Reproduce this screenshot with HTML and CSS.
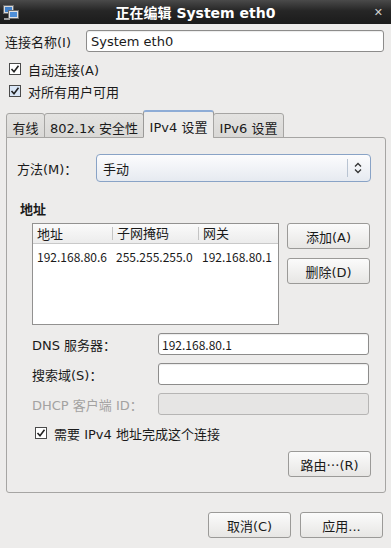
FILE: index.html
```html
<!DOCTYPE html>
<html>
<head>
    <title>正在编辑 System eth0</title>
    <link rel="stylesheet" href="styles.css">
</head>
<body>
<div class="titlebar">
    <svg class="winicon" width="16" height="16" viewBox="0 0 16 16">
        <rect x="0.5" y="0.5" width="10" height="8" fill="#d8d8d8" stroke="#6d6d6d"/>
        <rect x="2" y="2" width="7" height="5" fill="#3f7fc8"/>
        <rect x="5.5" y="5.5" width="10" height="8" fill="#e2e2e2" stroke="#6d6d6d"/>
        <rect x="7" y="7" width="7" height="5" fill="#4f8fd8"/>
        <rect x="1" y="13" width="6" height="2" fill="#9a9a9a"/>
    </svg>
    <div class="title">正在编辑 System eth0</div>
    <div class="close">✕</div>
</div>

<div class="name-row">
    <label class="name-label" for="conn">连接名称(I)</label>
    <input class="field name-field" type="text" id="conn" value="System eth0">
</div>

<div class="check check-first">
    <svg width="12" height="12" viewBox="0 0 12 12"><rect x="0.5" y="0.5" width="11" height="11" fill="#fff" stroke="#4a4a4a"/><path d="M2.5 6 L5 8.8 L9.5 2.8" fill="none" stroke="#222" stroke-width="1.6"/></svg>
    <span>自动连接(A)</span>
</div>
<div class="check">
    <svg width="12" height="12" viewBox="0 0 12 12"><rect x="0.5" y="0.5" width="11" height="11" fill="#d9e6f6" stroke="#4a4a4a"/><path d="M2.5 6 L5 8.8 L9.5 2.8" fill="none" stroke="#222" stroke-width="1.6"/></svg>
    <span>对所有用户可用</span>
</div>

<div class="tabs">
    <div class="tab tab-wired">有线</div>
    <div class="tab tab-sec">802.1x 安全性</div>
    <div class="tab tab-active">IPv4 设置</div>
    <div class="tab tab-v6">IPv6 设置</div>
</div>

<div class="panel">
    <div class="method-row">
        <span class="method-label">方法(M)：</span>
        <div class="select">
            <span class="select-value">手动</span>
            <span class="select-sep"></span>
            <svg class="select-arrow" width="8" height="12" viewBox="0 0 8 12"><path d="M1 4.5 L4 1.5 L7 4.5 M1 7.5 L4 10.5 L7 7.5" fill="none" stroke="#333" stroke-width="1.3"/></svg>
        </div>
    </div>

    <div class="section-title">地址</div>

    <div class="addr-area">
        <div class="addr-list">
            <div class="addr-head">
                <div class="col col1">地址</div>
                <div class="col col2">子网掩码</div>
                <div class="col col3">网关</div>
            </div>
            <div class="addr-row">
                <div class="col col1">192.168.80.6</div>
                <div class="col col2">255.255.255.0</div>
                <div class="col col3">192.168.80.1</div>
            </div>
        </div>
        <div class="addr-buttons">
            <button class="btn">添加(A)</button>
            <button class="btn">删除(D)</button>
        </div>
    </div>

    <div class="form-row">
        <span class="form-label">DNS 服务器：</span>
        <input class="field form-field ip" type="text" value="192.168.80.1">
    </div>
    <div class="form-row">
        <span class="form-label">搜索域(S)：</span>
        <input class="field form-field" type="text" value="">
    </div>
    <div class="form-row">
        <span class="form-label disabled">DHCP 客户端 ID：</span>
        <input class="field form-field" type="text" value="" disabled>
    </div>

    <div class="check inner-check">
        <svg width="12" height="12" viewBox="0 0 12 12"><rect x="0.5" y="0.5" width="11" height="11" fill="#fff" stroke="#4a4a4a"/><path d="M2.5 6 L5 8.8 L9.5 2.8" fill="none" stroke="#222" stroke-width="1.6"/></svg>
        <span>需要 IPv4 地址完成这个连接</span>
    </div>

    <div class="route-row">
        <button class="btn">路由<span class="cjk">…</span>(R)</button>
    </div>
</div>

<div class="dialog-buttons">
    <button class="btn">取消(C)</button>
    <button class="btn">应用...</button>
</div>
</body>
</html>
```

FILE: styles.css
```css
* {
    box-sizing: border-box;
}

body {
    margin: 0;
    width: 391px;
    height: 548px;
    overflow: hidden;
    background: #edeceb;
    color: #1a1a1a;
    font-family: "DejaVu Sans", "Noto Sans CJK SC", sans-serif;
    font-size: 13px;
}

.cjk {
    font-family: "Noto Sans CJK SC", sans-serif;
}

/* Window title bar */
.titlebar {
    height: 24px;
    display: grid;
    grid-template-columns: 30px 1fr 30px;
    align-items: center;
    background: linear-gradient(#4a4a4a, #262626 45%, #1b1b1b);
    color: #fff;
}

.winicon {
    margin-left: 3px;
    margin-top: 1px;
}

.title {
    text-align: center;
    font-weight: bold;
    font-size: 14px;
}

.close {
    text-align: right;
    padding-right: 8px;
    color: #d0d0d0;
    font-weight: bold;
    font-size: 11px;
}

/* Connection name */
.name-row {
    display: flex;
    align-items: center;
    height: 22px;
    margin: 6px 7px 0 5px;
}

.name-label {
    width: 81px;
}

.field {
    height: 22px;
    border: 1px solid #8d8c8b;
    border-radius: 3px;
    background: #fff;
    padding: 0 4px;
    font-family: "DejaVu Sans", "Noto Sans CJK SC", sans-serif;
    font-size: 13px;
    color: #1a1a1a;
    box-shadow: inset 0 1px 1px rgba(0, 0, 0, 0.08);
}

.field:disabled {
    background: #e6e5e4;
    border-color: #b6b5b4;
    box-shadow: none;
}

.name-field {
    flex: 1;
    height: 22px;
    padding-left: 4px;
}

/* Checkboxes */
.check {
    display: flex;
    align-items: center;
    height: 22px;
    padding-left: 9px;
    gap: 7px;
}

.check-first {
    margin-top: 6px;
}

/* Notebook tabs */
.tabs {
    display: flex;
    align-items: flex-end;
    margin: 8px 0 -1px 6px;
    position: relative;
    z-index: 1;
}

.tab {
    height: 25px;
    padding-top: 4px;
    text-align: center;
    border: 1px solid #a6a5a3;
    border-radius: 3px 3px 0 0;
    background: linear-gradient(#e4e3e1, #d9d8d6);
    color: #1a1a1a;
}

.tab + .tab {
    margin-left: -1px;
}

.tab-wired { width: 39px; }
.tab-sec { width: 100px; }
.tab-v6 { width: 71px; }

.tab-active {
    width: 71px;
    height: 28px;
    padding-top: 5px;
    background: #edeceb;
    border-color: #9a9998;
    border-top: 2px solid #8eacd6;
    border-bottom-color: #edeceb;
}

.panel {
    margin-left: 6px;
    width: 380px;
    height: 356px;
    border: 1px solid #a6a5a3;
    border-radius: 0 3px 3px 3px;
    background: #edeceb;
    padding: 16px 14px 0 0;
}

/* Method selector */
.method-row {
    display: flex;
    align-items: center;
    height: 28px;
}

.method-label {
    width: 89px;
    padding-left: 10px;
}

.select {
    flex: 1;
    height: 28px;
    display: flex;
    align-items: center;
    border: 1px solid #89a3c6;
    border-radius: 4px;
    background: linear-gradient(#fcfcfd, #e6eaf0);
    padding: 0 8px 0 6px;
}

.select-value {
    flex: 1;
}

.select-sep {
    width: 1px;
    height: 18px;
    background: #b9c4d2;
    margin-right: 6px;
}

.section-title {
    font-weight: bold;
    height: 16px;
    line-height: 16px;
    margin: 20px 0 5px 13px;
}

/* Address list */
.addr-area {
    display: flex;
    gap: 8px;
    margin-left: 25px;
}

.addr-list {
    width: 247px;
    height: 102px;
    border: 1px solid #929190;
    background: #fff;
}

.addr-head {
    display: flex;
    height: 20px;
    align-items: center;
    background: linear-gradient(#fafafa, #ececec);
    border-bottom: 1px solid #c9c9c9;
}

.addr-head .col + .col {
    border-left: 1px solid #c4c4c4;
    padding-left: 4px;
    line-height: 13px;
}

.addr-row {
    display: flex;
    height: 22px;
    align-items: center;
    padding-top: 3px;
    font-family: "Noto Sans CJK SC", sans-serif;
    font-size: 12px;
}

.col1 { width: 79px; padding-left: 4px; }
.col2 { width: 86px; }
.col3 { flex: 1; }

.addr-row .col2,
.addr-row .col3 {
    padding-left: 4px;
}

.addr-buttons {
    display: flex;
    flex-direction: column;
    gap: 9px;
}

.btn {
    width: 83px;
    height: 26px;
    border: 1px solid #9b9a98;
    border-radius: 3px;
    background: linear-gradient(#fbfbfb, #e7e6e4);
    font-family: "DejaVu Sans", "Noto Sans CJK SC", sans-serif;
    font-size: 13px;
    color: #1a1a1a;
    padding: 0;
}

/* DNS / search fields */
.form-row {
    display: flex;
    align-items: center;
    margin: 8px 0 0 25px;
}

.form-label {
    width: 126px;
}

.form-label.disabled {
    color: #a3a2a1;
}

.form-field {
    width: 211px;
}

.ip {
    font-family: "Noto Sans CJK SC", sans-serif;
    font-size: 12px;
    padding-left: 3px;
}

.inner-check {
    margin-top: 7px;
    padding-left: 28px;
}

.route-row {
    display: flex;
    justify-content: flex-end;
    margin-top: 7px;
}

/* Dialog buttons */
.dialog-buttons {
    display: flex;
    justify-content: flex-end;
    gap: 9px;
    margin: 19px 8px 0 0;
}
```
